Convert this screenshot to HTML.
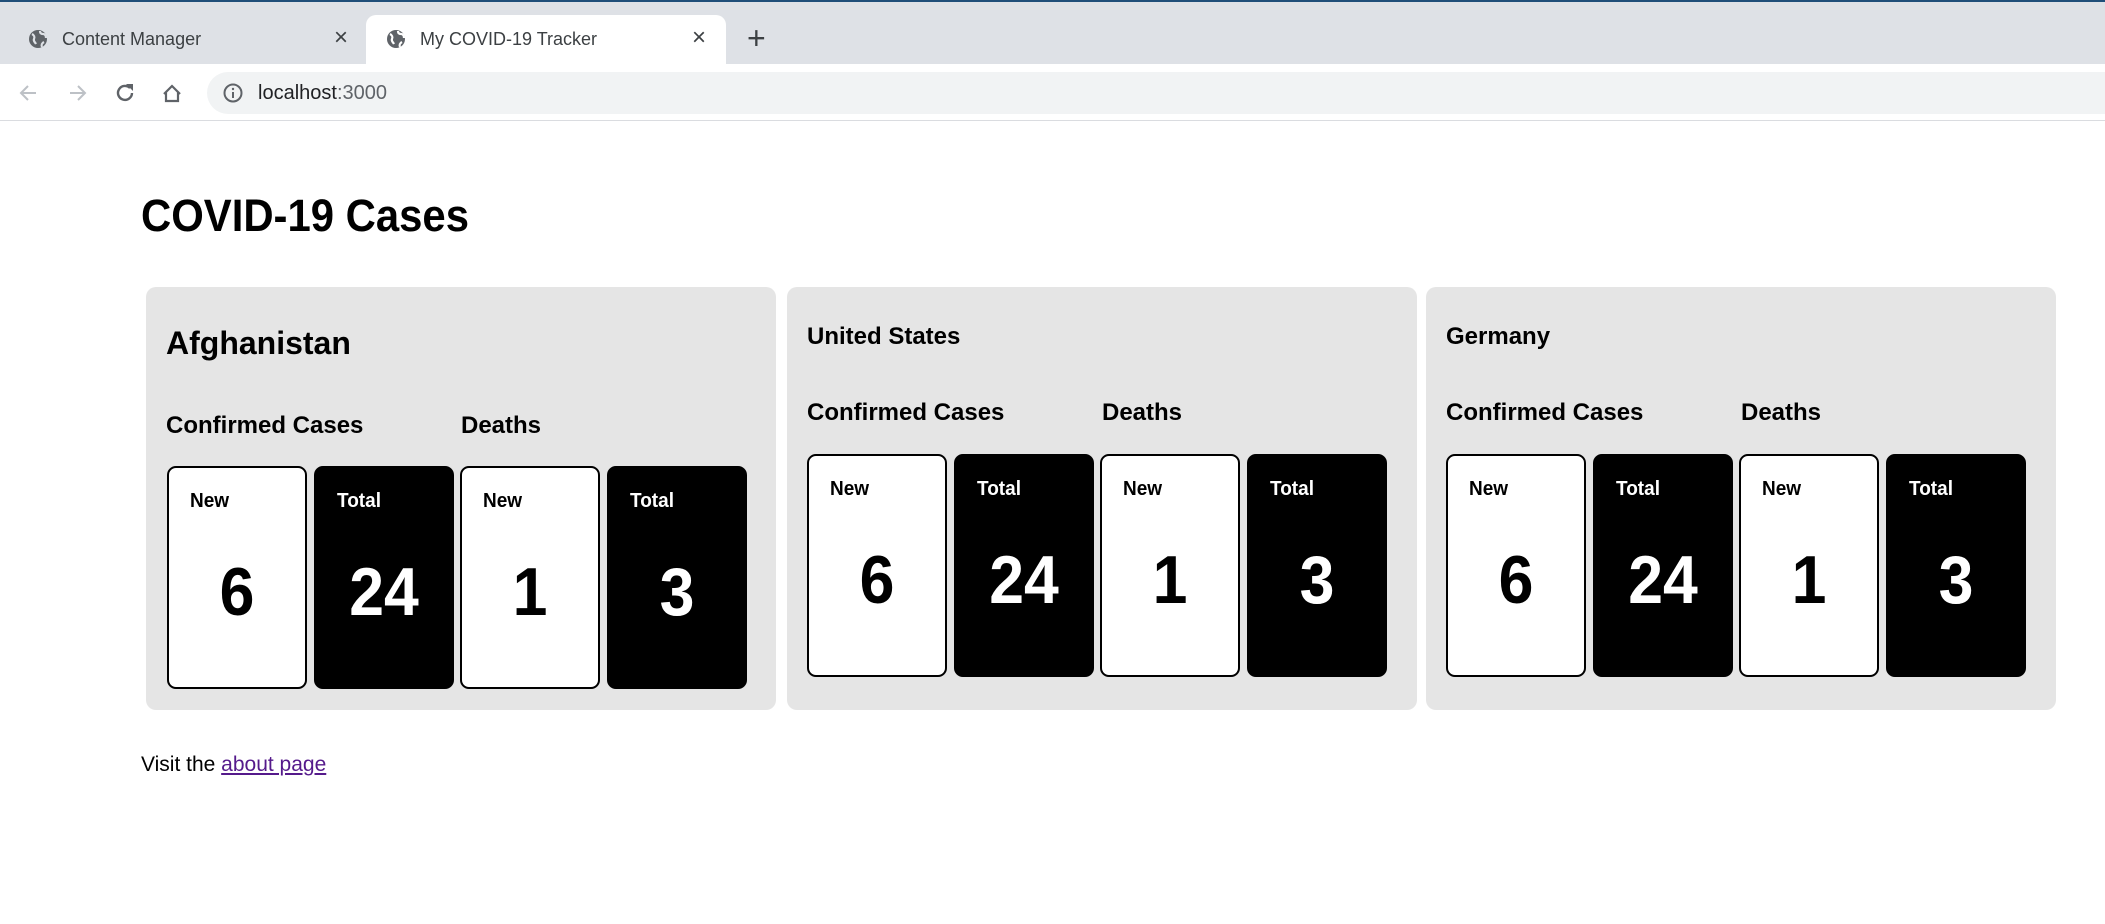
<!DOCTYPE html>
<html><head><meta charset="utf-8"><style>
*{box-sizing:border-box;margin:0;padding:0}
body{width:2105px;height:924px;overflow:hidden;background:#fff;font-family:"Liberation Sans",Arial,sans-serif;position:relative}
.abs{position:absolute}
.tabbar{left:0;top:0;width:2105px;height:64px;background:#dee1e6;border-top:2px solid #1f4e79}
.tab{top:15px;height:49px;left:366px;width:360px;background:#fff;border-radius:10px 10px 0 0}
.tt{font-size:18px;color:#3c4043;line-height:20px}
.toolbar{left:0;top:64px;width:2105px;height:57px;background:#fff;border-bottom:1px solid #dadce0}
.omni{left:207px;top:72px;width:1920px;height:42px;background:#f1f3f4;border-radius:21px}
.card{background:#e5e5e5;border-radius:10px;top:287px;height:423px;width:630px}
.card .t{position:absolute;font-weight:bold;white-space:nowrap}
.box{position:absolute;width:140px;height:223px;border:2px solid #000;border-radius:9px;background:#fff;color:#000}
.box.b{background:#000;color:#fff}
.box .l{position:absolute;left:21px;top:22px;font-size:20px;font-weight:bold;line-height:22px;transform:scaleX(0.95);transform-origin:left}
.box .n{position:absolute;left:0;right:0;top:90px;text-align:center;font-size:68px;font-weight:bold;line-height:68px;transform:scaleX(0.92)}
</style></head><body>
<div class="abs tabbar"></div>
<div class="abs tab"></div>
<svg class="abs" style="left:28px;top:29px" width="20" height="20" viewBox="0 0 20 20"><circle cx="10" cy="10" r="9" fill="#5f6368"/><path d="M4 5c2 1 3 3 2 5s1 3 2 5M12 2c0 2 1 3 3 3s3 2 3 4M14 18c-1-2 0-4 2-5" stroke="#dee1e6" stroke-width="2.2" fill="none"/></svg>
<div class="abs tt" style="left:62px;top:29px">Content Manager</div>
<div class="abs" style="left:334px;top:24px;font-size:24px;color:#3c4043">×</div>
<svg class="abs" style="left:386px;top:29px" width="20" height="20" viewBox="0 0 20 20"><circle cx="10" cy="10" r="9" fill="#5f6368"/><path d="M4 5c2 1 3 3 2 5s1 3 2 5M12 2c0 2 1 3 3 3s3 2 3 4M14 18c-1-2 0-4 2-5" stroke="#fff" stroke-width="2.2" fill="none"/></svg>
<div class="abs tt" style="left:420px;top:29px">My COVID-19 Tracker</div>
<div class="abs" style="left:692px;top:24px;font-size:24px;color:#3c4043">×</div>
<div class="abs" style="left:747px;top:20px;font-size:32px;color:#3c4043;line-height:36px">+</div>
<div class="abs toolbar"></div>
<svg class="abs" style="left:16px;top:80px" width="200" height="26" viewBox="0 0 200 26">
<path d="M20 13H6M12 6l-7 7 7 7" stroke="#bdc1c6" stroke-width="2" fill="none"/>
<path d="M54 13h14M62 6l7 7-7 7" stroke="#bdc1c6" stroke-width="2" fill="none"/>
<path d="M114 8a7 7 0 1 0 2 5" stroke="#5f6368" stroke-width="2.4" fill="none"/><path d="M110 4h7v7z" fill="#5f6368"/>
<path d="M148 14l8-8 8 8M150 12v9h12v-9" stroke="#5f6368" stroke-width="2.2" fill="none"/>
</svg>
<div class="abs omni"></div>
<svg class="abs" style="left:222px;top:82px" width="22" height="22" viewBox="0 0 22 22"><circle cx="11" cy="11" r="8.5" stroke="#5f6368" stroke-width="2" fill="none"/><path d="M11 10v6" stroke="#5f6368" stroke-width="2"/><circle cx="11" cy="7" r="1.2" fill="#5f6368"/></svg>
<div class="abs" style="left:258px;top:81px;font-size:20px;line-height:24px;color:#202124">localhost<span style="color:#5f6368">:3000</span></div>

<div class="abs" style="left:141px;top:192px;font-size:45px;font-weight:bold;line-height:48px;transform:scaleX(0.93);transform-origin:left">COVID-19 Cases</div>

<div class="abs card" style="left:146px">
 <div class="t" style="left:20px;top:40px;font-size:32px;line-height:32px">Afghanistan</div>
 <div class="t" style="left:20px;top:127px;font-size:24px;line-height:24px">Confirmed Cases</div>
 <div class="t" style="left:315px;top:127px;font-size:24px;line-height:24px">Deaths</div>
 <div class="box" style="left:21px;top:179px"><div class="l">New</div><div class="n">6</div></div>
 <div class="box b" style="left:168px;top:179px"><div class="l">Total</div><div class="n">24</div></div>
 <div class="box" style="left:314px;top:179px"><div class="l">New</div><div class="n">1</div></div>
 <div class="box b" style="left:461px;top:179px"><div class="l">Total</div><div class="n">3</div></div>
</div>
<div class="abs card" style="left:787px">
 <div class="t" style="left:20px;top:38px;font-size:24px;line-height:24px">United States</div>
 <div class="t" style="left:20px;top:114px;font-size:24px;line-height:24px">Confirmed Cases</div>
 <div class="t" style="left:315px;top:114px;font-size:24px;line-height:24px">Deaths</div>
 <div class="box" style="left:20px;top:167px"><div class="l">New</div><div class="n">6</div></div>
 <div class="box b" style="left:167px;top:167px"><div class="l">Total</div><div class="n">24</div></div>
 <div class="box" style="left:313px;top:167px"><div class="l">New</div><div class="n">1</div></div>
 <div class="box b" style="left:460px;top:167px"><div class="l">Total</div><div class="n">3</div></div>
</div>
<div class="abs card" style="left:1426px">
 <div class="t" style="left:20px;top:38px;font-size:24px;line-height:24px">Germany</div>
 <div class="t" style="left:20px;top:114px;font-size:24px;line-height:24px">Confirmed Cases</div>
 <div class="t" style="left:315px;top:114px;font-size:24px;line-height:24px">Deaths</div>
 <div class="box" style="left:20px;top:167px"><div class="l">New</div><div class="n">6</div></div>
 <div class="box b" style="left:167px;top:167px"><div class="l">Total</div><div class="n">24</div></div>
 <div class="box" style="left:313px;top:167px"><div class="l">New</div><div class="n">1</div></div>
 <div class="box b" style="left:460px;top:167px"><div class="l">Total</div><div class="n">3</div></div>
</div>

<div class="abs" style="left:141px;top:752px;font-size:21px;line-height:26px">Visit the <a href="#" style="color:#551a8b">about page</a></div>
</body></html>
